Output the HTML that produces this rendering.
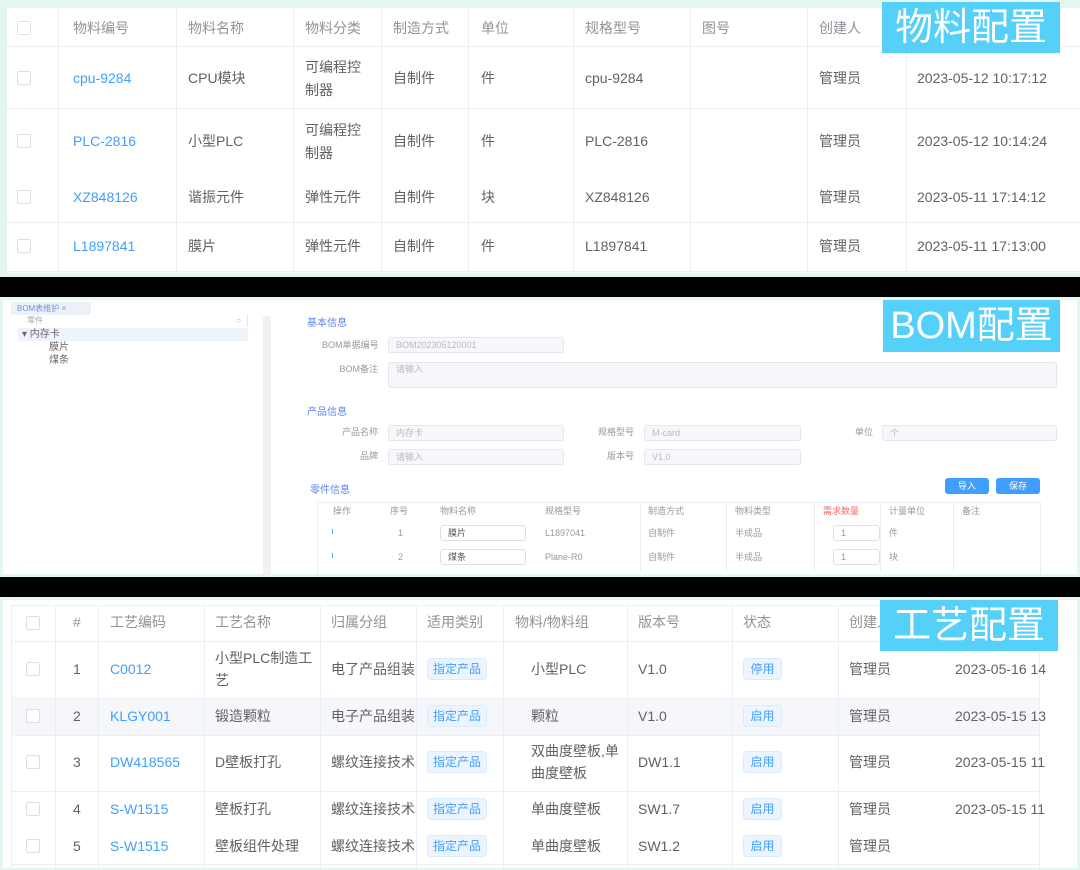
<!DOCTYPE html>
<html><head><meta charset="utf-8"><style>
*{margin:0;padding:0;box-sizing:border-box}
body{width:1080px;height:870px;background:#000;position:relative;overflow:hidden;font-family:"Liberation Sans","Noto Sans CJK SC",sans-serif;font-size:14px;color:#606266}
.a{position:absolute}
.sec{position:absolute;left:0;width:1080px;background:#e3f6ef}
.in{position:absolute;background:#fff}
.vl{position:absolute;width:1px;background:#ebeef5}
.hl{position:absolute;height:1px;background:#ebeef5}
.t{position:absolute;white-space:nowrap;line-height:22px}
.h{color:#909399;font-weight:normal}
.lk{color:#409eff}
.cb{position:absolute;width:14px;height:14px;border:1px solid #dcdfe6;border-radius:2px;background:#fff}
.badge{position:absolute;background:#55d0f9;color:#fff;font-size:38px;line-height:52px;text-align:center}
.tag{position:absolute;height:22px;line-height:20px;border:1px solid #d9ecff;background:#ecf5ff;color:#409eff;font-size:12px;border-radius:4px;text-align:center}
.s{font-size:9px;color:#999;line-height:14px}
.inp{position:absolute;background:#f5f7fa;border:1px solid #e4e7ed;border-radius:3px}
</style></head><body>

<!-- Section 1 -->
<div class="sec" style="top:0;height:277px"></div>
<div class="in" style="left:6px;top:7px;width:1074px;height:266px"></div>
<div class="hl" style="left:6px;top:7px;width:1074px"></div>
<div class="hl" style="left:6px;top:46px;width:1074px"></div>
<div class="hl" style="left:6px;top:108px;width:1074px"></div>
<div class="hl" style="left:6px;top:222px;width:1074px"></div>
<div class="hl" style="left:6px;top:271px;width:1074px"></div>
<div class="vl" style="left:6px;top:7px;height:266px"></div>
<div class="vl" style="left:58px;top:7px;height:266px"></div>
<div class="vl" style="left:176px;top:7px;height:266px"></div>
<div class="vl" style="left:293px;top:7px;height:266px"></div>
<div class="vl" style="left:381px;top:7px;height:266px"></div>
<div class="vl" style="left:468px;top:7px;height:266px"></div>
<div class="vl" style="left:573px;top:7px;height:266px"></div>
<div class="vl" style="left:690px;top:7px;height:266px"></div>
<div class="vl" style="left:807px;top:7px;height:266px"></div>
<div class="vl" style="left:906px;top:7px;height:266px"></div>
<div class="cb" style="left:17px;top:21px"></div>
<div class="t h" style="left:73px;top:17px">物料编号</div>
<div class="t h" style="left:188px;top:17px">物料名称</div>
<div class="t h" style="left:305px;top:17px">物料分类</div>
<div class="t h" style="left:393px;top:17px">制造方式</div>
<div class="t h" style="left:481px;top:17px">单位</div>
<div class="t h" style="left:585px;top:17px">规格型号</div>
<div class="t h" style="left:702px;top:17px">图号</div>
<div class="t h" style="left:819px;top:17px">创建人</div>

<div class="cb" style="left:17px;top:71px"></div>
<div class="t lk" style="left:73px;top:67px">cpu-9284</div>
<div class="t" style="left:188px;top:67px">CPU模块</div>
<div class="t" style="left:305px;top:56px">可编程控</div>
<div class="t" style="left:305px;top:79px">制器</div>
<div class="t" style="left:393px;top:67px">自制件</div>
<div class="t" style="left:481px;top:67px">件</div>
<div class="t" style="left:585px;top:67px">cpu-9284</div>
<div class="t" style="left:819px;top:67px">管理员</div>
<div class="t" style="left:917px;top:67px">2023-05-12 10:17:12</div>

<div class="cb" style="left:17px;top:134px"></div>
<div class="t lk" style="left:73px;top:130px">PLC-2816</div>
<div class="t" style="left:188px;top:130px">小型PLC</div>
<div class="t" style="left:305px;top:119px">可编程控</div>
<div class="t" style="left:305px;top:142px">制器</div>
<div class="t" style="left:393px;top:130px">自制件</div>
<div class="t" style="left:481px;top:130px">件</div>
<div class="t" style="left:585px;top:130px">PLC-2816</div>
<div class="t" style="left:819px;top:130px">管理员</div>
<div class="t" style="left:917px;top:130px">2023-05-12 10:14:24</div>

<div class="cb" style="left:17px;top:190px"></div>
<div class="t lk" style="left:73px;top:186px">XZ848126</div>
<div class="t" style="left:188px;top:186px">谐振元件</div>
<div class="t" style="left:305px;top:186px">弹性元件</div>
<div class="t" style="left:393px;top:186px">自制件</div>
<div class="t" style="left:481px;top:186px">块</div>
<div class="t" style="left:585px;top:186px">XZ848126</div>
<div class="t" style="left:819px;top:186px">管理员</div>
<div class="t" style="left:917px;top:186px">2023-05-11 17:14:12</div>

<div class="cb" style="left:17px;top:239px"></div>
<div class="t lk" style="left:73px;top:235px">L1897841</div>
<div class="t" style="left:188px;top:235px">膜片</div>
<div class="t" style="left:305px;top:235px">弹性元件</div>
<div class="t" style="left:393px;top:235px">自制件</div>
<div class="t" style="left:481px;top:235px">件</div>
<div class="t" style="left:585px;top:235px">L1897841</div>
<div class="t" style="left:819px;top:235px">管理员</div>
<div class="t" style="left:917px;top:235px">2023-05-11 17:13:00</div>
<div class="badge" style="left:882px;top:2px;width:178px;height:51px">物料配置</div>

<!-- Section 2 -->
<div class="sec" style="top:297px;height:280px"></div>
<div class="in" style="left:3px;top:300px;width:1074px;height:274px"></div>
<div class="a" style="left:11px;top:302px;width:80px;height:13px;background:#eef2f8;color:#6b8fe6;font-size:8px;line-height:13px;padding-left:6px">BOM表维护 ×</div>
<div class="a" style="left:18px;top:315px;width:230px;height:12px;border-right:1px solid #e4e7ed;font-size:8px;color:#aaa;padding-left:9px;line-height:12px">零件<span style="float:right;margin-right:6px">○</span></div>
<div class="a" style="left:18px;top:328px;width:230px;height:13px;background:#eef3fc"></div>
<div class="t s" style="left:22px;top:328px;color:#666;font-size:10px">▾ 内存卡</div>
<div class="t s" style="left:49px;top:341px;color:#666;font-size:10px">膜片</div>
<div class="t s" style="left:49px;top:354px;color:#666;font-size:10px">煤条</div>
<div class="a" style="left:263px;top:316px;width:8px;height:259px;background:#f2f2f2"></div>
<div class="t s" style="left:307px;top:317px;color:#5b84ee;font-size:10px">基本信息</div>
<div class="t s" style="left:322px;top:338px;width:56px;text-align:right">BOM单据编号</div>
<div class="inp" style="left:388px;top:337px;width:176px;height:16px"></div>
<div class="t s" style="left:396px;top:338px;color:#bbb">BOM202305120001</div>
<div class="t s" style="left:322px;top:362px;width:56px;text-align:right">BOM备注</div>
<div class="inp" style="left:388px;top:362px;width:669px;height:26px"></div>
<div class="t s" style="left:396px;top:362px;color:#bbb">请输入</div>
<div class="t s" style="left:307px;top:406px;color:#5b84ee;font-size:10px">产品信息</div>
<div class="t s" style="left:322px;top:425px;width:56px;text-align:right">产品名称</div>
<div class="inp" style="left:388px;top:425px;width:176px;height:16px"></div>
<div class="t s" style="left:396px;top:426px;color:#bbb">内存卡</div>
<div class="t s" style="left:578px;top:425px;width:56px;text-align:right">规格型号</div>
<div class="inp" style="left:644px;top:425px;width:157px;height:16px"></div>
<div class="t s" style="left:652px;top:426px;color:#bbb">M-card</div>
<div class="t s" style="left:817px;top:425px;width:56px;text-align:right">单位</div>
<div class="inp" style="left:882px;top:425px;width:175px;height:16px"></div>
<div class="t s" style="left:890px;top:426px;color:#bbb">个</div>
<div class="t s" style="left:322px;top:449px;width:56px;text-align:right">品牌</div>
<div class="inp" style="left:388px;top:449px;width:176px;height:16px"></div>
<div class="t s" style="left:396px;top:450px;color:#bbb">请输入</div>
<div class="t s" style="left:578px;top:449px;width:56px;text-align:right">版本号</div>
<div class="inp" style="left:644px;top:449px;width:157px;height:16px"></div>
<div class="t s" style="left:652px;top:450px;color:#bbb">V1.0</div>
<div class="t s" style="left:310px;top:484px;color:#5b84ee;font-size:10px">零件信息</div>
<div class="a" style="left:945px;top:478px;width:44px;height:16px;background:#409eff;border-radius:3px;color:#fff;font-size:9px;text-align:center;line-height:16px">导入</div>
<div class="a" style="left:996px;top:478px;width:44px;height:16px;background:#409eff;border-radius:3px;color:#fff;font-size:9px;text-align:center;line-height:16px">保存</div>
<div class="a" style="left:317px;top:502px;width:724px;height:73px;border:1px solid #ebeef5;border-bottom:none"></div>
<div class="vl" style="left:640px;top:502px;height:70px"></div>
<div class="vl" style="left:726px;top:502px;height:70px"></div>
<div class="vl" style="left:814px;top:502px;height:70px"></div>
<div class="vl" style="left:880px;top:502px;height:70px"></div>
<div class="vl" style="left:953px;top:502px;height:70px"></div>
<div class="t s" style="left:333px;top:504px">操作</div>
<div class="t s" style="left:390px;top:504px">序号</div>
<div class="t s" style="left:440px;top:504px">物料名称</div>
<div class="t s" style="left:545px;top:504px">规格型号</div>
<div class="t s" style="left:648px;top:504px">制造方式</div>
<div class="t s" style="left:735px;top:504px">物料类型</div>
<div class="t s" style="left:823px;top:504px;color:#f56c6c">需求数量</div>
<div class="t s" style="left:889px;top:504px">计量单位</div>
<div class="t s" style="left:962px;top:504px">备注</div>
<div class="a" style="left:332px;top:529px;width:1px;height:5px;background:#409eff"></div>
<div class="a" style="left:332px;top:553px;width:1px;height:5px;background:#409eff"></div>
<div class="t s" style="left:398px;top:526px">1</div>
<div class="t s" style="left:398px;top:550px">2</div>
<div class="a" style="left:440px;top:525px;width:86px;height:16px;border:1px solid #dcdfe6;border-radius:3px"></div>
<div class="a" style="left:440px;top:549px;width:86px;height:16px;border:1px solid #dcdfe6;border-radius:3px"></div>
<div class="t s" style="left:448px;top:526px;color:#555">膜片</div>
<div class="t s" style="left:448px;top:550px;color:#555">煤条</div>
<div class="t s" style="left:545px;top:526px">L1897041</div>
<div class="t s" style="left:545px;top:550px">Plane-R0</div>
<div class="t s" style="left:648px;top:526px">自制件</div>
<div class="t s" style="left:648px;top:550px">自制件</div>
<div class="t s" style="left:735px;top:526px">半成品</div>
<div class="t s" style="left:735px;top:550px">半成品</div>
<div class="a" style="left:833px;top:525px;width:47px;height:16px;border:1px solid #dcdfe6;border-radius:3px"></div>
<div class="a" style="left:833px;top:549px;width:47px;height:16px;border:1px solid #dcdfe6;border-radius:3px"></div>
<div class="t s" style="left:833px;top:526px;padding-left:8px">1</div>
<div class="t s" style="left:833px;top:550px;padding-left:8px">1</div>
<div class="t s" style="left:889px;top:526px">件</div>
<div class="t s" style="left:889px;top:550px">块</div>
<div class="badge" style="left:883px;top:300px;width:177px;height:52px">BOM配置</div>

<!-- Section 3 -->
<div class="sec" style="top:597px;height:273px"></div>
<div class="in" style="left:3px;top:600px;width:1074px;height:268px"></div>
<div class="a" style="left:11px;top:697px;width:1028px;height:38px;background:#f5f7fa"></div>
<div class="hl" style="left:11px;top:605px;width:1028px"></div>
<div class="hl" style="left:11px;top:641px;width:1028px"></div>
<div class="hl" style="left:11px;top:791px;width:1028px"></div>
<div class="hl" style="left:11px;top:864px;width:1028px"></div>
<div class="hl" style="left:11px;top:735px;width:1028px"></div>
<div class="vl" style="left:11px;top:605px;height:265px"></div>
<div class="vl" style="left:55px;top:605px;height:265px"></div>
<div class="vl" style="left:98px;top:605px;height:265px"></div>
<div class="vl" style="left:204px;top:605px;height:265px"></div>
<div class="vl" style="left:320px;top:605px;height:265px"></div>
<div class="vl" style="left:416px;top:605px;height:265px"></div>
<div class="vl" style="left:503px;top:605px;height:265px"></div>
<div class="vl" style="left:627px;top:605px;height:265px"></div>
<div class="vl" style="left:732px;top:605px;height:265px"></div>
<div class="vl" style="left:838px;top:605px;height:265px"></div>
<div class="vl" style="left:1039px;top:605px;height:265px"></div>
<div class="cb" style="left:26px;top:616px"></div>
<div class="t h" style="left:73px;top:611px">#</div>
<div class="t h" style="left:110px;top:611px">工艺编码</div>
<div class="t h" style="left:215px;top:611px">工艺名称</div>
<div class="t h" style="left:321px;top:611px;padding-left:10px">归属分组</div>
<div class="t h" style="left:427px;top:611px">适用类别</div>
<div class="t h" style="left:515px;top:611px">物料/物料组</div>
<div class="t h" style="left:638px;top:611px">版本号</div>
<div class="t h" style="left:743px;top:611px">状态</div>
<div class="t h" style="left:849px;top:611px">创建人</div>

<div class="cb" style="left:26px;top:662px"></div>
<div class="t" style="left:73px;top:658px">1</div>
<div class="t lk" style="left:110px;top:658px">C0012</div>
<div class="t" style="left:215px;top:647px">小型PLC制造工</div>
<div class="t" style="left:215px;top:669px">艺</div>
<div class="t" style="left:331px;top:658px">电了产品组装</div>
<div class="tag" style="left:427px;top:658px;width:60px">指定产品</div>
<div class="t" style="left:531px;top:658px">小型PLC</div>
<div class="t" style="left:638px;top:658px">V1.0</div>
<div class="tag" style="left:743px;top:658px;width:39px">停用</div>
<div class="t" style="left:849px;top:658px">管理员</div>
<div class="t" style="left:955px;top:658px">2023-05-16 14</div>

<div class="cb" style="left:26px;top:709px"></div>
<div class="t" style="left:73px;top:705px">2</div>
<div class="t lk" style="left:110px;top:705px">KLGY001</div>
<div class="t" style="left:215px;top:705px">锻造颗粒</div>
<div class="t" style="left:331px;top:705px">电子产品组装</div>
<div class="tag" style="left:427px;top:705px;width:60px">指定产品</div>
<div class="t" style="left:531px;top:705px">颗粒</div>
<div class="t" style="left:638px;top:705px">V1.0</div>
<div class="tag" style="left:743px;top:705px;width:39px">启用</div>
<div class="t" style="left:849px;top:705px">管理员</div>
<div class="t" style="left:955px;top:705px">2023-05-15 13</div>

<div class="cb" style="left:26px;top:755px"></div>
<div class="t" style="left:73px;top:751px">3</div>
<div class="t lk" style="left:110px;top:751px">DW418565</div>
<div class="t" style="left:215px;top:751px">D壁板打孔</div>
<div class="t" style="left:331px;top:751px">螺纹连接技术</div>
<div class="tag" style="left:427px;top:751px;width:60px">指定产品</div>
<div class="t" style="left:531px;top:740px">双曲度壁板,单</div>
<div class="t" style="left:531px;top:762px">曲度壁板</div>
<div class="t" style="left:638px;top:751px">DW1.1</div>
<div class="tag" style="left:743px;top:751px;width:39px">启用</div>
<div class="t" style="left:849px;top:751px">管理员</div>
<div class="t" style="left:955px;top:751px">2023-05-15 11</div>

<div class="cb" style="left:26px;top:802px"></div>
<div class="t" style="left:73px;top:798px">4</div>
<div class="t lk" style="left:110px;top:798px">S-W1515</div>
<div class="t" style="left:215px;top:798px">壁板打孔</div>
<div class="t" style="left:331px;top:798px">螺纹连接技术</div>
<div class="tag" style="left:427px;top:798px;width:60px">指定产品</div>
<div class="t" style="left:531px;top:798px">单曲度壁板</div>
<div class="t" style="left:638px;top:798px">SW1.7</div>
<div class="tag" style="left:743px;top:798px;width:39px">启用</div>
<div class="t" style="left:849px;top:798px">管理员</div>
<div class="t" style="left:955px;top:798px">2023-05-15 11</div>

<div class="cb" style="left:26px;top:839px"></div>
<div class="t" style="left:73px;top:835px">5</div>
<div class="t lk" style="left:110px;top:835px">S-W1515</div>
<div class="t" style="left:215px;top:835px">壁板组件处理</div>
<div class="t" style="left:331px;top:835px">螺纹连接技术</div>
<div class="tag" style="left:427px;top:835px;width:60px">指定产品</div>
<div class="t" style="left:531px;top:835px">单曲度壁板</div>
<div class="t" style="left:638px;top:835px">SW1.2</div>
<div class="tag" style="left:743px;top:835px;width:39px">启用</div>
<div class="t" style="left:849px;top:835px">管理员</div>
<div class="badge" style="left:880px;top:600px;width:178px;height:51px">工艺配置</div>
</body></html>
